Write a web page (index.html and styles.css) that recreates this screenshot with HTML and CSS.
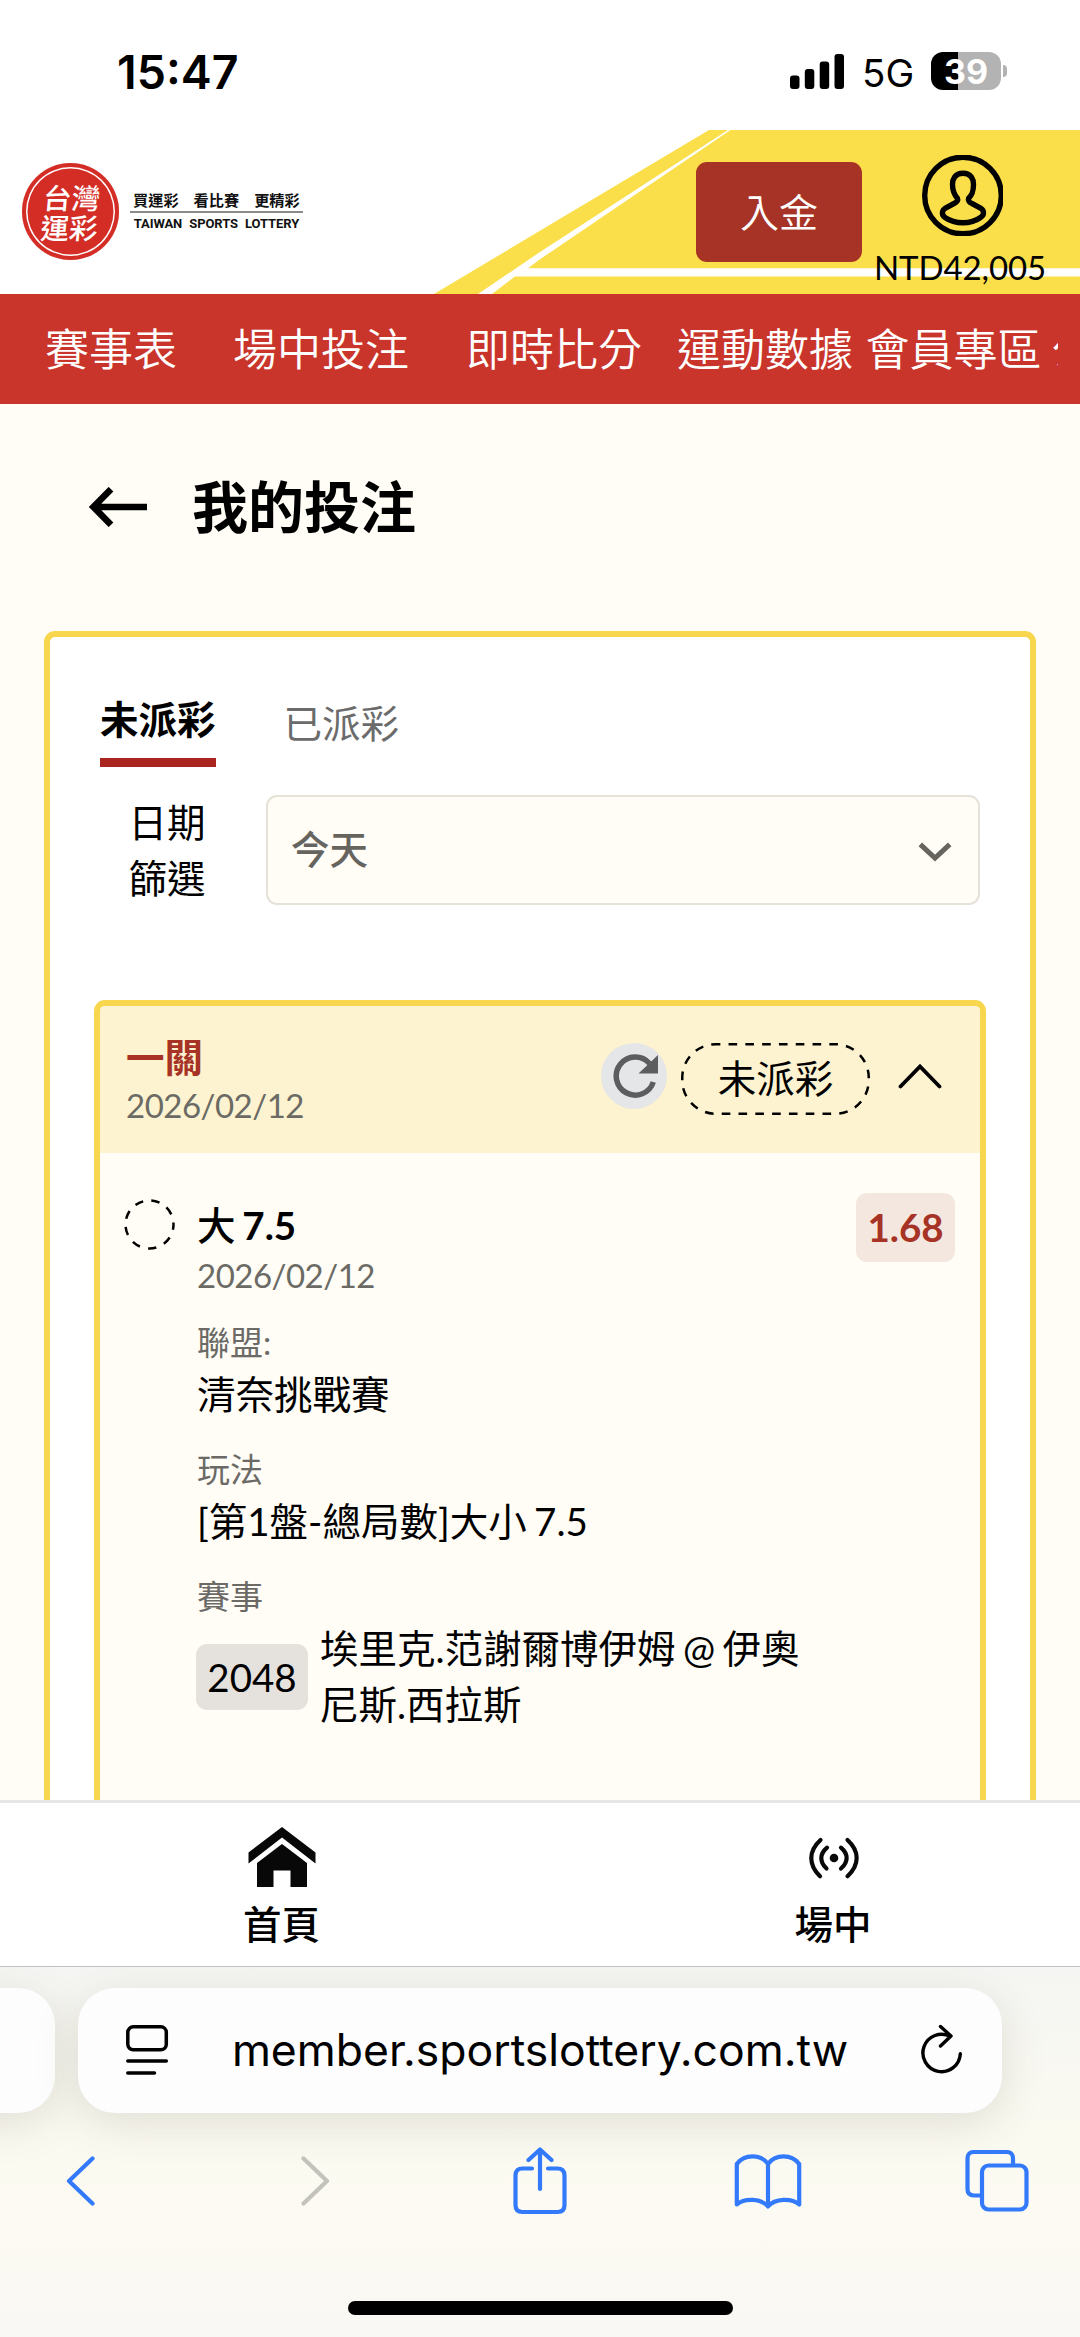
FILE: index.html
```html
<!DOCTYPE html>
<html lang="zh-Hant">
<head>
<meta charset="utf-8">
<title>我的投注</title>
<link rel="stylesheet" href="styles.css">
</head>
<body>
<div class="screen">
  <div class="status">
    <span class="time">15:47</span>
    <div class="status-right">
      <svg class="signal" width="54" height="35" viewBox="0 0 54 35"><rect x="0" y="21.5" width="9.5" height="13.5" rx="3"/><rect x="14.8" y="15" width="9.5" height="20" rx="3"/><rect x="29.7" y="7.5" width="9.5" height="27.5" rx="3"/><rect x="44.5" y="0" width="9.5" height="35" rx="3"/></svg>
      <span class="net">5G</span>
      <div class="battery"><span>39</span></div>
      <i class="battery-tip"></i>
    </div>
  </div>

  <header class="brandbar">
    <svg class="stripes" width="1080" height="164" viewBox="0 130 1080 164">
      <path fill="#fadf4b" d="M434 294 709 130H728L540 252 478 294Z"/>
      <path fill="#fadf4b" d="M730.5 130H1080V268.3H528L540 259.3Z"/>
      <path fill="#fadf4b" d="M515 276.5H1080V294H492Z"/>
    </svg>
    <div class="seal"><div class="seal-text">台灣<br>運彩</div></div>
    <div class="slogan">
      <div class="slogan-zh"><span>買運彩</span><span>看比賽</span><span>更精彩</span></div>
      <div class="slogan-en">TAIWAN SPORTS LOTTERY</div>
    </div>
    <button class="deposit">入金</button>
    <div class="account">
      <svg width="81" height="81" viewBox="0 0 81 81" fill="none" stroke="#000" stroke-width="5.4"><circle cx="41" cy="40.500" r="38.300"/><path d="M41 18.300C32.500 18.300 30.500 24.500 30.500 29.500C30.500 37 32.500 40 35.500 43.500C36.300 45.500 34 47.500 32 48.500L23.500 53C19.500 55.500 19.500 60 23 62.500C33 69.500 49 69.500 58.500 62.500C62.500 60 62.500 55.500 58.500 53L50 48.500C47.500 47.500 45.700 45.500 46.500 43.500C50 40 51.500 37 51.500 29.500C51.500 24.500 49.500 18.300 41 18.300Z"/></svg>
      <span class="balance">NTD42,005</span>
    </div>
  </header>

  <nav class="menu">
    <span>賽事表</span><span>場中投注</span><span>即時比分</span><span>運動數據</span><span>會員專區</span><span>公告</span>
  </nav>

  <main class="page">
    <div class="heading">
      <svg width="58" height="40" viewBox="0 0 58 40" fill="none" stroke="#000" stroke-width="6.600"><path d="M4 20H58M22 2.200 4.500 20 22 37.800"/></svg>
      <h1>我的投注</h1>
    </div>

    <section class="panel">
      <div class="tabs"><span class="tab active">未派彩</span><span class="tab">已派彩</span></div>
      <div class="filter">
        <label>日期<br>篩選</label>
        <div class="select"><span>今天</span>
          <svg width="34" height="20" viewBox="0 0 34 20" fill="none" stroke="#66645f" stroke-width="5"><path d="M2.300 2.300 17 16 31.700 2.300"/></svg>
        </div>
      </div>

      <article class="bet">
        <div class="bet-head">
          <div class="bet-title"><strong>一關</strong><span class="date">2026/02/12</span></div>
          <div class="refresh"><svg width="46" height="46" viewBox="0 0 46 46"><path fill="none" stroke="#5b5d5f" stroke-width="5.500" d="M41.300 29A19 19 0 1 1 37.500 10.500"/><path fill="#5b5d5f" d="M46 2V20.500H26.500Z"/></svg></div>
          <div class="pill"><svg width="189" height="72" viewBox="0 0 189 72"><rect x="1.250" y="1.250" width="186.500" height="69.500" rx="33.500" fill="none" stroke="#000" stroke-width="2.500" stroke-dasharray="8.600 8.200" stroke-dashoffset="4"/></svg><span>未派彩</span></div>
          <svg class="fold" width="44" height="26" viewBox="0 0 44 26" fill="none" stroke="#000" stroke-width="3.800" stroke-linecap="round"><path d="M2.500 23.500 22 3.500 41.500 23.500"/></svg>
        </div>
        <div class="bet-body">
          <svg class="mark" width="51" height="51" viewBox="0 0 51 51"><circle cx="25.500" cy="25.500" r="24" fill="none" stroke="#000" stroke-width="2.500" stroke-dasharray="8.400 8.350" stroke-dashoffset="3"/></svg>
          <div class="leg">
            <div class="pick"><span>大</span> 7.5</div>
            <div class="date">2026/02/12</div>
            <div class="field first"><span class="label">聯盟:</span><span class="value">清奈挑戰賽</span></div>
            <div class="field"><span class="label">玩法</span><span class="value">[第1盤-總局數]大小 7.5</span></div>
            <div class="field"><span class="label">賽事</span><div class="match"><span class="code">2048</span><span class="value">埃里克.范謝爾博伊姆 @ 伊奧<br>尼斯.西拉斯</span></div></div>
          </div>
          <span class="odds">1.68</span>
        </div>
      </article>
    </section>
  </main>

  <nav class="dock">
    <div class="dock-item home">
      <svg width="68" height="60" viewBox="0 0 68 60" fill="#080808"><path d="M34 0 67.500 25.500V36.500L34 10.500.5 36.500V25.500Z"/><path d="M34 17 59 36V60H42.500V43.500H25.500V60H9V36Z"/></svg>
      <span>首頁</span>
    </div>
    <div class="dock-item live">
      <svg width="52" height="60" viewBox="0 0 52 60" fill="none" stroke="#080808" stroke-width="4.200" stroke-linecap="round"><circle cx="26" cy="31" r="4.300" fill="#080808" stroke="none"/><path d="M12.500 13C.3 24 .3 38 12 49.200M39.500 13C51.700 24 51.700 38 39.500 49.200M19 20.700C11.500 27 11.500 35 18.500 41.500M33 20.700C40.500 27 40.500 35 33 41.500"/></svg>
      <span>場中</span>
    </div>
  </nav>

  <footer class="browser">
    <div class="addresses">
      <div class="address previous"></div>
      <div class="address">
        <svg width="43" height="51" viewBox="0 0 43 51" fill="none" stroke="#000" stroke-width="3.500" stroke-linecap="round"><rect x="1.800" y="1.800" width="38.500" height="23" rx="5.500"/><path d="M1.800 36H40.300M1.800 48H28.500"/></svg>
        <span class="url">member.sportslottery.com.tw</span>
        <svg width="42" height="52" viewBox="0 0 42 52" fill="none" stroke="#000" stroke-width="3.400" stroke-linecap="round" stroke-linejoin="round"><path d="M39.300 29.800A18.700 18.700 0 1 1 29.500 12.500M19.500 2.500 30 12 19.500 22"/></svg>
      </div>
    </div>
    <div class="tools">
      <svg class="back" width="30" height="50" viewBox="0 0 30 50"><path d="M26.500 2.500 3 25 26.500 47.500"/></svg>
      <svg class="forward" width="30" height="50" viewBox="0 0 30 50"><path d="M3.500 2.500 27 25 3.500 47.500"/></svg>
      <svg class="share" width="54" height="68" viewBox="0 0 54 68"><path d="M19 21.500H9.500Q2.500 21.500 2.500 28.500V58Q2.500 65 9.500 65H44.500Q51.500 65 51.500 58V28.500Q51.500 21.500 44.500 21.500H35M27 42V3M15.500 13 27 2.500 38.500 13"/></svg>
      <svg class="book" width="68" height="56" viewBox="0 0 68 56"><path d="M34 11C27 .8 10 .8 2.800 11V51.500C10 45 27 45 34 53.500C41 45 58 45 65.200 51.500V11C58 .8 41 .8 34 11ZM34 11V52"/></svg>
      <svg class="windows" width="64" height="62" viewBox="0 0 64 62"><path d="M48 14V8.500Q48 2 41.500 2H9Q2.500 2 2.500 8.500V39Q2.500 45.500 9 45.500H16"/><rect x="17" y="15.500" width="44.500" height="44" rx="6.500"/></svg>
    </div>
    <div class="indicator"></div>
  </footer>
</div>
</body>
</html>
```

FILE: styles.css
```css
* { box-sizing: border-box; }
body { margin: 0; background: #fff; }
svg { display: block; flex: none; }
.screen {
  width: 1080px; height: 2337px; overflow: hidden;
  display: flex; flex-direction: column;
  font-family: Lato, "Noto Sans CJK TC", sans-serif;
  font-size: 38.500px; line-height: 55.500px; color: #000;
}

/* status bar */
.status { height: 130px; flex: none; display: flex; justify-content: space-between; padding: 0 73px 0 117px; font-family: Inter, sans-serif; }
.time { font-size: 46.500px; font-weight: 600; line-height: 144px; }
.status-right { display: flex; align-items: flex-start; padding-top: 52px; }
.signal { margin-top: 2px; }
.net { font-size: 38.500px; line-height: 43px; margin-left: 18px; width: 69px; }
.battery {
  width: 70px; height: 38px; border-radius: 12px; text-align: center;
  background: linear-gradient(90deg, #000 39%, #b3b3b3 39%);
  color: #fff; font-size: 34px; font-weight: 700; line-height: 39px;
}
.battery-tip { width: 4px; height: 12px; margin: 13px 0 0 2px; border-radius: 0 6px 6px 0; background: #b3b3b3; }

/* brand bar */
.brandbar { height: 163.500px; flex: none; display: flex; position: relative; padding-left: 22px; }
.stripes { position: absolute; left: 0; top: 0; }
.brandbar > :not(.stripes) { position: relative; }
.seal {
  width: 97px; height: 97px; margin-top: 33px; border-radius: 50%; flex: none;
  background: #d42d26; display: flex; align-items: center; justify-content: center;
  box-shadow: inset 0 0 0 4px #d42d26, inset 0 0 0 5.500px #fff;
}
.seal-text { color: #fff; font: 500 28.500px/30px "Noto Sans CJK TC", sans-serif; transform: skewX(-5deg); }
.slogan { width: 173px; margin: 57px 0 0 11px; flex: none; color: #111; }
.slogan-zh {
  display: flex; gap: 15px; padding: 0 3px; height: 26px;
  font: 700 15.200px/24px "Noto Sans CJK TC", sans-serif; border-bottom: 2px solid #8a8c87;
}
.slogan-en { font: 700 13px/16px Roboto, sans-serif; text-align: center; margin-top: 3px; word-spacing: 4px; letter-spacing: -.1px; white-space: nowrap; }
.deposit {
  width: 166px; height: 100px; margin: 32px 0 0 393px; padding: 0; border: 0; border-radius: 11px; flex: none;
  background: #a63325; color: #fff; font: 350 39px/99px Lato, "Noto Sans CJK TC", sans-serif;
}
.account { width: 170px; margin: 25px 0 0 13px; display: flex; flex-direction: column; align-items: center; flex: none; }
.account svg { margin-right: -4px; }
.balance { font-size: 33px; line-height: 44px; margin-top: 9px; letter-spacing: -.1px; }

/* red menu */
.menu {
  height: 110.500px; flex: none; background: #c9342b; color: #fff; display: flex;
  font-size: 44px; font-weight: 350; line-height: 110px; white-space: nowrap;
  padding-left: 45px; overflow: hidden; border-right: 22px solid #c9342b;
}
.menu span { flex: none; margin-right: 57px; }
.menu span:nth-child(1) { margin-right: 56px; }
.menu span:nth-child(3) { margin-right: 35px; }
.menu span:nth-child(4) { margin-right: 12.500px; }
.menu span:nth-child(5) { margin-right: 10px; }

/* page */
.page { height: 1395.700px; flex: none; background: #fffdf6; overflow: hidden; padding: 0 44px; }
.heading { height: 227px; padding: 65px 0 0 45px; display: flex; gap: 45px; align-items: flex-start; }
.heading svg { margin-top: 17.500px; }
h1 { margin: 0; font-size: 56px; font-weight: 700; line-height: 76px; }
.panel { height: 1400px; border: 6px solid #f8d74f; border-radius: 11px; background: #fff; padding: 55px 44px 0; }
.tabs { display: flex; gap: 68px; padding-left: 6px; }
.tab { color: #6b6b6b; padding-top: 4px; }
.tab.active { color: #000; font-weight: 700; height: 75px; padding-top: 0; border-bottom: 9px solid #ab2520; }
.filter { display: flex; margin-top: 28px; padding-right: 6px; }
.filter label { width: 111.500px; text-align: right; margin-right: 60.500px; }
.select {
  width: 714px; height: 110px; flex: none; border: 2.500px solid #e6e2da; border-radius: 11px; background: #fffdf6;
  display: flex; align-items: center; justify-content: space-between; padding: 0 26px 1px 23px;
  color: #66645f; font-weight: 500;
}
.select svg { margin-top: 5px; }

/* bet card */
.bet { width: 892px; height: 1000px; margin-top: 94px; border: 6px solid #f8d74f; border-radius: 11px; background: #fffdf6; overflow: hidden; }
.bet-head { height: 146.500px; background: #fdf3d0; display: flex; padding: 25px 0 0 26px; }
.bet-title { display: flex; flex-direction: column; width: 475px; }
.bet-title strong { color: #a63325; line-height: 52px; }
.date { font-size: 33px; line-height: 44.500px; color: #6b6a64; display: block; letter-spacing: -.5px; }
.refresh { width: 66px; height: 66px; border-radius: 50%; background: #e4e6e8; margin: 12px 0 0; padding: 10px 0 0 11px; }
.pill { width: 189px; height: 72px; margin: 12px 0 0 14px; display: grid; place-items: center; }
.pill > * { grid-area: 1 / 1; }
.fold { margin: 32px 0 0 28px; }
.bet-body { display: flex; align-items: flex-start; padding: 40px 25px 0 24px; }
.mark { margin-top: 6px; }
.leg { margin: 5px 0 0 22px; flex: 1; }
.pick { font-weight: 700; word-spacing: -2.500px; }
.pick span { font-weight: 500; }
.field { margin-top: 24px; display: flex; flex-direction: column; }
.field.first { margin-top: 21.500px; }
.label { font-size: 33px; line-height: 47.700px; color: #6b6a66; }
.value { word-spacing: -2.500px; }
.match { display: flex; align-items: center; gap: 12px; margin-left: -1px; white-space: nowrap; }
.code { width: 112px; height: 66px; line-height: 67px; border-radius: 11px; background: #e5e2dd; text-align: center; }
.odds { width: 99px; height: 69px; line-height: 69px; border-radius: 11px; background: #f4e7df; color: #a63325; font-weight: 700; text-align: center; flex: none; }

/* site dock */
.dock { height: 166px; flex: none; display: flex; border-top: 3px solid #e6e6e6; background: #fff; font-weight: 700; padding-top: 24.500px; }
.dock-item { display: flex; flex-direction: column; align-items: center; flex: none; }
.dock-item span { line-height: 56px; margin-top: 9px; font-weight: 500; }
.home { width: 563px; }
.live { width: 540px; }
.live svg { margin-left: 2px; }

/* browser chrome */
.browser {
  height: 371.300px; flex: none; border-top: 1px solid #c0c2bf; overflow: hidden;
  background: linear-gradient(180deg, #f5f5f3, #fbfaf1 45%, #fcfaf2 70%, #f9f8f4);
}
.addresses { display: flex; margin: 21.500px 78px 0 -120px; gap: 23px; }
.address {
  width: 924px; height: 124.500px; flex: none; border-radius: 37px; background: #fdfdfd;
  box-shadow: 0 10px 44px rgba(80, 75, 50, .15);
  display: flex; align-items: center; justify-content: space-between; padding: 0 39px 0 48px;
}
.address.previous { width: 175px; }
.url { font-family: Inter, sans-serif; font-size: 44.500px; padding-right: 10px; }
.tools { display: flex; align-items: center; margin-top: 34px; padding-left: 66px; height: 68px; }
.tools svg { fill: none; stroke: #337afb; stroke-width: 4.200; stroke-linecap: round; stroke-linejoin: round; }
.tools .forward { stroke: #c4c2bc; margin-left: 204px; }
.tools .share { margin-left: 183px; }
.tools .book { margin-left: 167px; }
.tools .windows { margin-left: 163px; }
.indicator { width: 385px; height: 14px; border-radius: 7px; background: #000; margin: 86px auto 0; }
```
